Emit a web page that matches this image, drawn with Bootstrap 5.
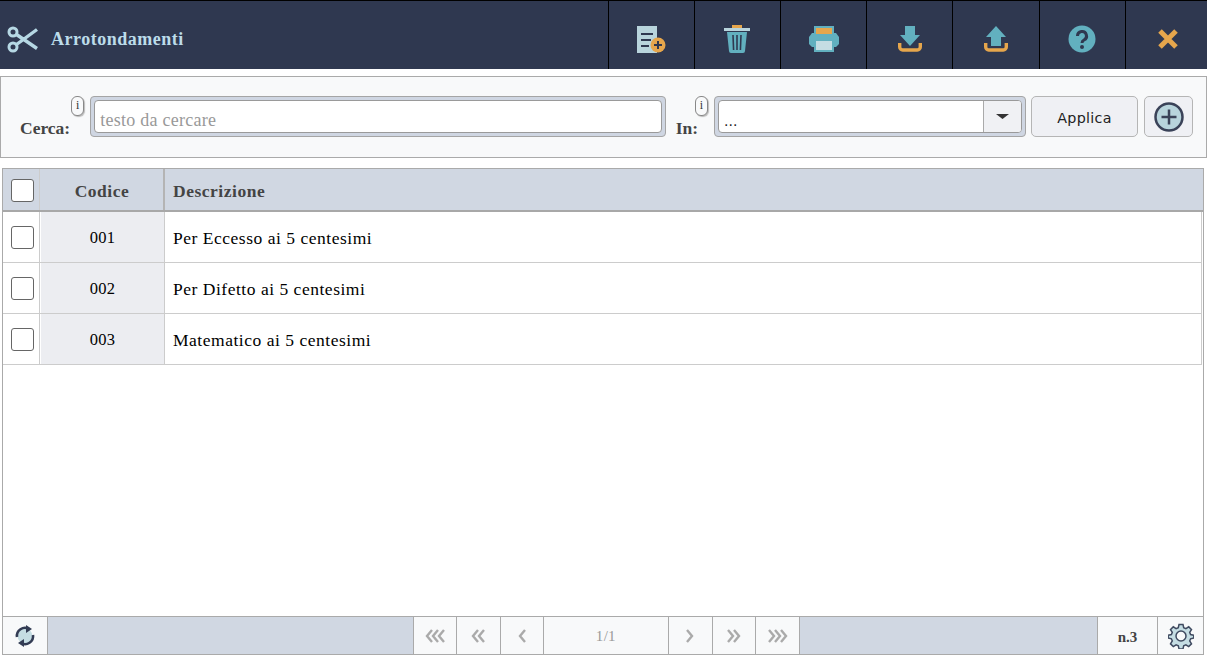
<!DOCTYPE html>
<html lang="it">
<head>
<meta charset="utf-8">
<title>Arrotondamenti</title>
<link href="https://cdn.jsdelivr.net/npm/bootstrap@5.3.0/dist/css/bootstrap.min.css" rel="stylesheet">
<style>
html,body{height:655px;overflow:hidden;background:#fff}
body{font-family:"Liberation Serif","Times New Roman",serif;font-size:16px;color:#000}
.topbar{height:69px;background:#2f3850;border-top:1px solid #000;overflow:hidden}
.apptitle{font-size:18px;font-weight:700;color:#bcdcea;letter-spacing:.5px;padding:9px 0 0 7px;gap:13px}
.toolgroup{margin-right:-4px}
.toolbtn{width:86.2px;height:68px;border-left:1px solid #000;padding-top:7px}
.toolbtn svg,.pagebtn svg{display:block}
.filterbox{height:82px;margin-top:7px;background:#f8f9fa;border:1px solid #aaa;padding:19px 13px 0 19px}
.lbl{font-size:17.5px;font-weight:700;color:#444;line-height:20px;padding-top:22px;white-space:nowrap}
.lblin{margin-left:10px}
.tip{width:13px;height:20px;margin:0 0 0 1px;background:#f8f9fa;border:1px solid #888;border-radius:6px;box-shadow:1px 1px 1px #bbb;font-size:12px;line-height:17px;text-align:center;color:#333;flex:none}
.tipover{margin-left:-3px}
.fieldwrap{height:41px;background:#cfd6e2;border:1px solid #a5a5a5;border-radius:4px;padding:3px}
.searchwrap{margin-left:6px}
.selfield{width:312px;flex:none;margin-left:6px}
.txtinput{width:100%;height:33px;border:1px solid #9a9a9a;border-radius:4px;background:#fff;font:18px/38px "Liberation Serif",serif;color:#999;padding:0 0 0 5px;letter-spacing:.25px;overflow:hidden}
.selwrap{height:33px;background:#fff;border:1px solid #9a9a9a;border-radius:4px;font:14px/41px "DejaVu Sans",sans-serif;padding-left:5px;color:#222;overflow:hidden}
.selarrow{width:38px;height:100%;background:#f0f1f4;border-left:1px solid #aaa}
.applybtn{height:41px;width:107px;margin-left:5px;background:#eff0f4;border:1px solid #b5b5b5;border-radius:5px;font:14.3px "DejaVu Sans",sans-serif;color:#222;letter-spacing:.3px;padding-top:3px}
.addbtn{height:41px;width:49px;margin-left:6px;background:#eff0f4;border:1px solid #b5b5b5;border-radius:5px}
.gridbox{height:487px;margin:10px 3px 0 2px;border:1px solid #aaa}
.headrow{height:43px;background:#d0d7e2;border-bottom:2px solid #a8a8a8;font-weight:700;color:#444;font-size:17.5px;letter-spacing:.5px}
.datarow{height:51px;border-bottom:1px solid #ccc;border-right:1px solid #ccc;margin-right:1px;font-size:17.5px}
.cellchk{width:37px;flex:none;border-right:1px solid #ccc;padding-left:8px}
.headrow .cellchk{padding-top:1px}
.cellcode{width:124px;flex:none;text-align:center;border-right:1px solid #ccc;margin-left:1px;padding-top:3px}
.headrow .cellcode{border-right:2px solid #b4b4b4;padding-top:4px}
.datarow .cellcode{background:#ecedf1;font-size:16.5px;letter-spacing:.3px}
.celldesc{padding:3px 0 0 8px;letter-spacing:.52px}
.headrow .celldesc{padding-top:4px}
.chk{display:block;width:23px;height:23px;background:#fff;border:1px solid #666;border-radius:3px}
.spacearea{flex:1 1 auto}
.footrow{height:38px;background:#d0d7e2;border-top:1px solid #aaa}
.footcell{background:#f8f9fa;border-right:1px solid #aaa;height:100%}
.refresh{width:45px}
.fillbar{width:366px;flex:none;border-right:1px solid #aaa}
.pagebtn{width:43.3px;color:#aaa}
.pageright{width:43.8px}
.pageinfo{width:125px;font-size:15px;color:#999;letter-spacing:.3px;padding-top:2px}
.fillbar2{flex:1 1 auto;border-right:1px solid #aaa}
.countcell{width:60px;font-size:15px;font-weight:700;color:#444;padding-top:4px}
.gearcell{width:45px;border-right:0}
</style>
</head>
<body class="m-0">

<header class="topbar d-flex align-items-center">
  <div class="apptitle d-flex align-items-center flex-grow-1">
    <svg width="31" height="29" viewBox="0 0 31 29" fill="none" stroke="#b6d8e4" aria-hidden="true">
      <circle cx="6" cy="7" r="4" stroke-width="3"/>
      <circle cx="6" cy="22" r="4" stroke-width="3"/>
      <path d="M9.500 9.500 30 23.500M9.500 19.500 30 4.500" stroke-width="3.400"/>
    </svg>
    <span>Arrotondamenti</span>
  </div>
  <div class="toolgroup d-flex">
    <div class="toolbtn d-flex align-items-center justify-content-center">
      <svg width="30" height="28" viewBox="0 0 30 28"><path fill="#b8d4dc" d="M1 1h20v27H1z"/><path stroke="#2f3850" stroke-width="2" d="M5 9h12M5 15h10M5 21h8"/><circle cx="22" cy="20" r="7.500" fill="#e6a64c"/><path stroke="#2f3850" stroke-width="2" d="M18 20h8M22 16v8"/></svg>
    </div>
    <div class="toolbtn d-flex align-items-center justify-content-center">
      <svg width="26" height="28" viewBox="0 0 26 28"><path fill="#e6a64c" d="M8 0h10v3H8z"/><path fill="#b8d4dc" d="M0 3h26v3H0z"/><path fill="#62b0bf" d="M3 7h20l-2 19a2 2 0 0 1-2 2H7a2 2 0 0 1-2-2z"/><path stroke="#2f3850" stroke-width="1.600" d="M9 10l.6 15M13 10v15M17 10l-.6 15"/></svg>
    </div>
    <div class="toolbtn d-flex align-items-center justify-content-center">
      <svg width="30" height="26" viewBox="0 0 30 26"><path fill="#62b0bf" d="M5 0h20v7h2l3 4v7l-3 3h-2v5H5v-5H3l-3-3v-7l3-4h2z"/><path fill="#e6a64c" d="M7 2h16v6H7z"/><path fill="#c5dde3" d="M7 15h16v9H7z"/></svg>
    </div>
    <div class="toolbtn d-flex align-items-center justify-content-center">
      <svg width="24" height="26" viewBox="0 0 24 26"><path fill="#62b0bf" d="M7 0h10v9h5L12 20 2 9h5z"/><path fill="none" stroke="#e6a64c" stroke-width="3.400" d="M1.700 17v4a3 3 0 0 0 3 3h14.600a3 3 0 0 0 3-3v-4"/></svg>
    </div>
    <div class="toolbtn d-flex align-items-center justify-content-center">
      <svg width="24" height="26" viewBox="0 0 24 26"><path fill="#62b0bf" d="M12 0l10 11h-5v9H7v-9H2z"/><path fill="none" stroke="#e6a64c" stroke-width="3.400" d="M1.700 17v4a3 3 0 0 0 3 3h14.600a3 3 0 0 0 3-3v-4"/></svg>
    </div>
    <div class="toolbtn d-flex align-items-center justify-content-center">
      <svg width="28" height="28" viewBox="0 0 28 28"><circle cx="14" cy="14" r="13.500" fill="#62b0bf"/><path fill="none" stroke="#2f3850" stroke-width="3" d="M9.500 11a4.500 4.500 0 1 1 6.500 4c-1.500.8-2 1.500-2 3"/><circle cx="14" cy="22" r="2" fill="#2f3850"/></svg>
    </div>
    <div class="toolbtn d-flex align-items-center justify-content-center">
      <svg width="20" height="20" viewBox="0 0 20 20"><path stroke="#e6a64c" stroke-width="5" d="M2 2l16 16M18 2 2 18"/></svg>
    </div>
  </div>
</header>

<section class="filterbox d-flex">
  <span class="lbl">Cerca:</span>
  <span class="tip">i</span>
  <div class="fieldwrap searchwrap flex-grow-1"><div class="txtinput">testo da cercare</div></div>
  <span class="lbl lblin">In:</span>
  <span class="tip tipover">i</span>
  <div class="fieldwrap selfield">
    <div class="selwrap d-flex justify-content-between">
      <span>...</span>
      <span class="selarrow d-flex align-items-center justify-content-center"><svg width="13" height="5" viewBox="0 0 13 5"><path fill="#333" d="M0 0h13L6.500 5z"/></svg></span>
    </div>
  </div>
  <button class="applybtn" type="button">Applica</button>
  <button class="addbtn d-flex align-items-center justify-content-center p-0" type="button">
    <svg width="30" height="30" viewBox="0 0 30 30"><circle cx="15" cy="15" r="13.500" fill="#b8d4dc" stroke="#3a4258" stroke-width="2.500"/><path stroke="#3a4258" stroke-width="2.500" d="M7.500 15h15M15 7.500v15"/></svg>
  </button>
</section>

<main class="gridbox d-flex flex-column">
  <div class="headrow d-flex align-items-center flex-none">
    <div class="cellchk h-100 d-flex align-items-center"><span class="chk"></span></div>
    <div class="cellcode h-100 d-flex align-items-center justify-content-center">Codice</div>
    <div class="celldesc">Descrizione</div>
  </div>
  <div class="datarow d-flex align-items-center">
    <div class="cellchk h-100 d-flex align-items-center"><span class="chk"></span></div>
    <div class="cellcode h-100 d-flex align-items-center justify-content-center">001</div>
    <div class="celldesc">Per Eccesso ai 5 centesimi</div>
  </div>
  <div class="datarow d-flex align-items-center">
    <div class="cellchk h-100 d-flex align-items-center"><span class="chk"></span></div>
    <div class="cellcode h-100 d-flex align-items-center justify-content-center">002</div>
    <div class="celldesc">Per Difetto ai 5 centesimi</div>
  </div>
  <div class="datarow d-flex align-items-center">
    <div class="cellchk h-100 d-flex align-items-center"><span class="chk"></span></div>
    <div class="cellcode h-100 d-flex align-items-center justify-content-center">003</div>
    <div class="celldesc">Matematico ai 5 centesimi</div>
  </div>
  <div class="spacearea"></div>
  <footer class="footrow d-flex align-items-center">
    <div class="footcell refresh d-flex align-items-center justify-content-center">
      <svg width="24" height="24" viewBox="0 0 24 24"><circle cx="12" cy="12" r="7.500" fill="#c5dde3"/><path fill="none" stroke="#333c54" stroke-width="2.600" d="M4 13A8 8 0 0 1 16 5M20 11a8 8 0 0 1-12 8"/><path fill="#333c54" d="M13 1l6 4-6 4zM11 15l-6 4 6 4z"/></svg>
    </div>
    <div class="fillbar h-100"></div>
    <div class="footcell pagebtn d-flex align-items-center justify-content-center"><svg width="20" height="14" viewBox="0 0 20 14" fill="none" stroke="#aaa" stroke-width="2.400"><path d="M7 1 2 7l5 6M13 1 8 7l5 6M19 1l-5 6 5 6"/></svg></div>
    <div class="footcell pagebtn d-flex align-items-center justify-content-center"><svg width="14" height="14" viewBox="0 0 14 14" fill="none" stroke="#aaa" stroke-width="2.400"><path d="M7 1 2 7l5 6M13 1 8 7l5 6"/></svg></div>
    <div class="footcell pagebtn d-flex align-items-center justify-content-center"><svg width="8" height="14" viewBox="0 0 8 14" fill="none" stroke="#aaa" stroke-width="2.400"><path d="M7 1 2 7l5 6"/></svg></div>
    <div class="footcell pageinfo d-flex align-items-center justify-content-center">1/1</div>
    <div class="footcell pagebtn pageright d-flex align-items-center justify-content-center"><svg width="8" height="14" viewBox="0 0 8 14" fill="none" stroke="#aaa" stroke-width="2.400"><path d="M1 1l5 6-5 6"/></svg></div>
    <div class="footcell pagebtn pageright d-flex align-items-center justify-content-center"><svg width="14" height="14" viewBox="0 0 14 14" fill="none" stroke="#aaa" stroke-width="2.400"><path d="M1 1l5 6-5 6M7 1l5 6-5 6"/></svg></div>
    <div class="footcell pagebtn pageright d-flex align-items-center justify-content-center"><svg width="20" height="14" viewBox="0 0 20 14" fill="none" stroke="#aaa" stroke-width="2.400"><path d="M1 1l5 6-5 6M7 1l5 6-5 6M13 1l5 6-5 6"/></svg></div>
    <div class="fillbar2 h-100"></div>
    <div class="footcell countcell d-flex align-items-center justify-content-center">n.3</div>
    <div class="footcell gearcell d-flex align-items-center justify-content-center">
      <svg width="26" height="26" viewBox="0 0 26 26"><path fill="#c5dde3" stroke="#3f4a60" stroke-width="1.500" d="M11 1.500h4l.7 3.200 2.200.9 2.800-1.800 2.800 2.800-1.800 2.800.9 2.200 3.200.7v2.800l-3.200.7-.9 2.200 1.800 2.800-2.800 2.800-2.800-1.800-2.200.9-.7 3.200h-4l-.7-3.200-2.200-.9-2.800 1.800-2.800-2.800 1.800-2.800-.9-2.200-3.200-.7v-2.800l3.200-.7.9-2.200-1.800-2.800 2.800-2.800 2.800 1.800 2.200-.9z"/><circle cx="13" cy="13" r="5" fill="#f8f9fa" stroke="#3f4a60" stroke-width="1.500"/></svg>
    </div>
  </footer>
</main>

<script src="https://cdn.jsdelivr.net/npm/bootstrap@5.3.0/dist/js/bootstrap.bundle.min.js"></script>
</body>
</html>
